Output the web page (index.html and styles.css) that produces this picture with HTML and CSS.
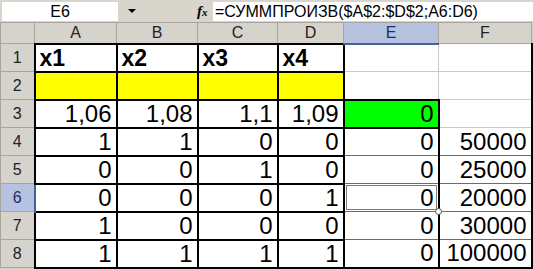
FILE: index.html
```html
<!DOCTYPE html>
<html lang="ru">
<head>
    <meta charset="UTF-8">
    <title>Лист</title>
    <link rel="stylesheet" href="styles.css">
</head>
<body>
    <div class="formula-bar">
        <div class="name-box">E6</div>
        <div class="name-drop"><span class="arrow"></span></div>
        <div class="fx">f<span>x</span></div>
        <div class="formula">=СУММПРОИЗВ($A$2:$D$2;A6:D6)</div>
    </div>
    <table class="sheet">
        <colgroup>
            <col class="c-head">
            <col class="c-a">
            <col class="c-b">
            <col class="c-c">
            <col class="c-d">
            <col class="c-e">
            <col class="c-f">
        </colgroup>
        <tr class="col-heads">
            <th class="corner"></th>
            <th>A</th>
            <th>B</th>
            <th>C</th>
            <th>D</th>
            <th class="sel">E</th>
            <th>F</th>
        </tr>
        <tr>
            <th class="row-head">1</th>
            <td class="blk lbl">x1</td>
            <td class="blk lbl">x2</td>
            <td class="blk lbl">x3</td>
            <td class="blk lbl">x4</td>
            <td></td>
            <td class="edge"></td>
        </tr>
        <tr>
            <th class="row-head">2</th>
            <td class="blk yellow"></td>
            <td class="blk yellow"></td>
            <td class="blk yellow"></td>
            <td class="blk yellow"></td>
            <td></td>
            <td class="edge"></td>
        </tr>
        <tr>
            <th class="row-head">3</th>
            <td class="blk">1,06</td>
            <td class="blk">1,08</td>
            <td class="blk">1,1</td>
            <td class="blk">1,09</td>
            <td class="blk green">0</td>
            <td class="edge"></td>
        </tr>
        <tr>
            <th class="row-head">4</th>
            <td class="blk">1</td>
            <td class="blk">1</td>
            <td class="blk">0</td>
            <td class="blk">0</td>
            <td class="side">0</td>
            <td class="side edge">50000</td>
        </tr>
        <tr>
            <th class="row-head">5</th>
            <td class="blk">0</td>
            <td class="blk">0</td>
            <td class="blk">1</td>
            <td class="blk">0</td>
            <td class="side">0</td>
            <td class="side edge">25000</td>
        </tr>
        <tr>
            <th class="row-head sel">6</th>
            <td class="blk">0</td>
            <td class="blk">0</td>
            <td class="blk">0</td>
            <td class="blk">1</td>
            <td class="side active">0</td>
            <td class="side edge">20000</td>
        </tr>
        <tr>
            <th class="row-head">7</th>
            <td class="blk">1</td>
            <td class="blk">0</td>
            <td class="blk">0</td>
            <td class="blk">0</td>
            <td class="side">0</td>
            <td class="side edge">30000</td>
        </tr>
        <tr class="last">
            <th class="row-head">8</th>
            <td class="blk">1</td>
            <td class="blk">1</td>
            <td class="blk">1</td>
            <td class="blk">1</td>
            <td class="side">0</td>
            <td class="side edge">100000</td>
        </tr>
    </table>
</body>
</html>
```
FILE: styles.css
```css
* {
    box-sizing: border-box;
}
body {
    margin: 0;
    width: 533px;
    height: 269px;
    overflow: hidden;
    background: #d4d0c8;
    font-family: "Liberation Sans", Arial, sans-serif;
    color: #000;
}

/* formula bar */
.formula-bar {
    display: flex;
    align-items: center;
    height: 22px;
    background: #d8d5cd;
}
.name-box {
    width: 116px;
    height: 19px;
    margin-left: 2px;
    background: #fff;
    text-align: center;
    font-size: 16px;
    line-height: 19px;
}
.name-drop {
    width: 32px;
    height: 19px;
    display: flex;
    align-items: center;
    padding-left: 10px;
}
.arrow {
    width: 0;
    height: 0;
    border-left: 4px solid transparent;
    border-right: 4px solid transparent;
    border-top: 4px solid #000;
}
.fx {
    margin-left: 47px;
    width: 16px;
    font-family: "Liberation Serif", serif;
    font-style: italic;
    font-weight: bold;
    font-size: 15px;
}
.fx span {
    font-size: 11px;
}
.formula {
    flex: 1;
    height: 19px;
    background: #fff;
    font-size: 16px;
    line-height: 19px;
    padding-left: 2px;
    white-space: nowrap;
}

/* grid */
.sheet {
    border-collapse: collapse;
    table-layout: fixed;
    width: 531px;
}
.c-head { width: 34px; }
.c-a { width: 82px; }
.c-b { width: 81px; }
.c-c { width: 80px; }
.c-d { width: 66px; }
.c-e { width: 95px; }
.c-f { width: 93px; }

th {
    background: #d6d3cc;
    font-weight: normal;
    font-size: 16px;
    line-height: 18px;
    color: #222;
    border: 1px solid #a9a59c;
    padding: 0;
}
.col-heads th {
    height: 21px;
}
th.sel {
    background: #b6c3e0;
    color: #1f2f5c;
}
.col-heads th.sel {
    border-bottom: 2px solid #4b5f97;
}
.row-head.sel {
    border-right: 2px solid #4b5f97;
}
td, .row-head {
    height: 28px;
}
td {
    background: #fff;
    border: 1px solid #c9c9c9;
    padding: 0 4px 0 0;
    text-align: right;
    font-size: 24px;
    line-height: 22px;
    white-space: nowrap;
}
td.blk {
    border: 2px solid #000;
}
td.lbl {
    text-align: left;
    font-weight: bold;
    font-size: 23px;
    padding-left: 4px;
}
td.yellow {
    background: #ffff00;
}
td.green {
    background: #00ff00;
}
td.side {
    border-left: 2px solid #000;
    border-top: 1px solid #6b6b6b;
    border-bottom: 1px solid #6b6b6b;
}
td.edge {
    border-right: 2px solid #000;
}
tr.last td {
    border-bottom: 2px solid #000;
}
td.active {
    position: relative;
    box-shadow: inset 0 0 0 1px #fff, inset 0 0 0 2px #7a7a7a;
}
td.active::after {
    content: "";
    position: absolute;
    right: -4px;
    bottom: -4px;
    width: 5px;
    height: 5px;
    border: 1px solid #555;
    border-radius: 50%;
    background: #fff;
}
```
